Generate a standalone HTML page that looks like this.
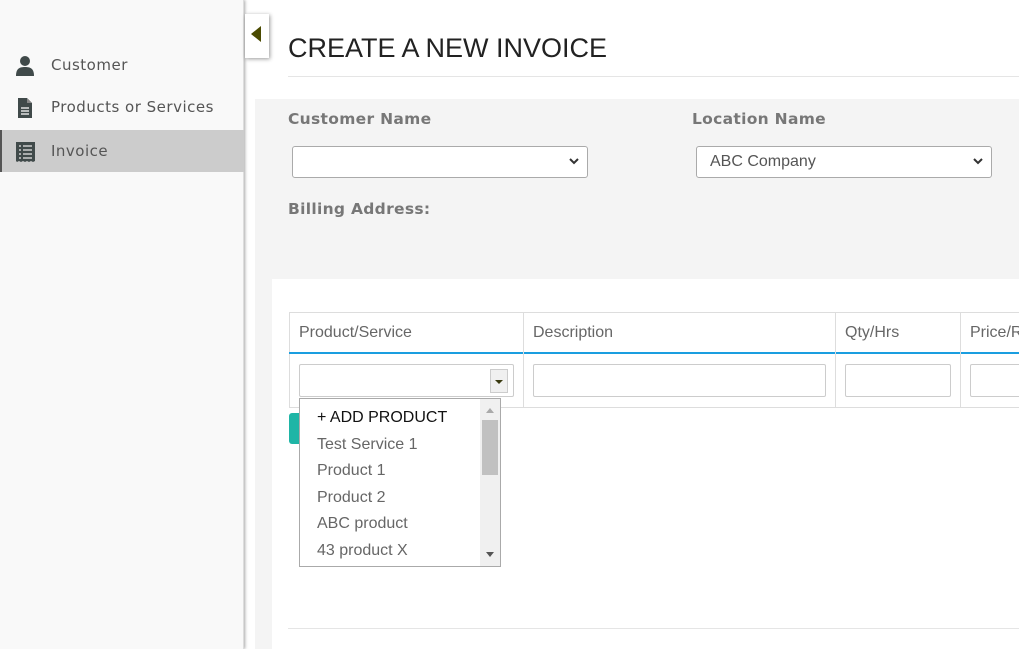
<!DOCTYPE html>
<html><head><meta charset="utf-8"><style>
*{box-sizing:border-box;margin:0;padding:0}
body{width:1019px;height:649px;overflow:hidden;background:#fff;font-family:"Liberation Sans",sans-serif;position:relative}
.abs{position:absolute}
.side{left:0;top:0;width:244px;height:649px;background:#f9f9f9;border-right:1px solid #ddd;box-shadow:1px 0 3px rgba(0,0,0,.35)}
.nav{position:absolute;left:0;width:244px;height:42px;font-family:"DejaVu Sans",sans-serif;font-size:15px;letter-spacing:.5px;color:#555;line-height:42px;padding-left:51px}
.nav svg{position:absolute;left:15px;top:11px}
.lbl{font-family:"DejaVu Sans",sans-serif;font-size:15.5px;font-weight:bold;color:#777;letter-spacing:.3px}
.sel{background:#fff;border:1px solid #aaa;border-radius:3px;height:32px;font-size:16px;color:#555;line-height:30px;padding-left:13px}
.chev{position:absolute;right:7px;top:8px}
.cell{position:absolute;border-right:1px solid #ddd}
.inp{position:absolute;background:#fff;border:1px solid #ccc;border-radius:2px;height:33px}
.th{font-size:16px;color:#666}
.opt{position:absolute;left:17px;font-size:16px;color:#666}
</style></head><body>
<div class="abs side">
 <div class="nav" style="top:44px">
  <svg width="20" height="22" viewBox="0 0 20 22"><circle cx="10" cy="6" r="5" fill="#404a4a"/><path d="M1 21 C1 14 4 12 10 12 C16 12 19 14 19 21Z" fill="#404a4a"/></svg>Customer</div>
 <div class="nav" style="top:86px">
  <svg width="20" height="22" viewBox="0 0 20 22"><path d="M3 1H12L17 6V21H3Z" fill="#404a4a"/><path d="M12 1V6H17" fill="#888"/><path d="M6 11H14M6 14H14M6 17H14" stroke="#fff" stroke-width="1.3"/></svg>Products or Services</div>
 <div class="nav" style="top:130px;background:#ccc;border-left:2px solid #555;padding-left:49px">
  <svg width="22" height="22" viewBox="0 0 22 22" style="left:13px"><path d="M1 1H20V20L18 21 16 20 14 21 12 20 10 21 8 20 6 21 4 20 2 21 1 20Z" fill="#404a4a"/><path d="M4 5h2M4 9h2M4 13h2M4 17h2M8 5h9M8 9h9M8 13h9M8 17h9" stroke="#ccc" stroke-width="1.5"/></svg>Invoice</div>
</div>
<div class="abs" style="left:245px;top:14px;width:24px;height:44px;background:#fff;box-shadow:1px 1px 4px rgba(0,0,0,.4)">
 <svg width="24" height="44"><path d="M16 12V28L6 20Z" fill="#4a4a00"/></svg></div>
<div class="abs" style="left:288px;top:33px;font-size:27px;color:#222">CREATE A NEW INVOICE</div>
<div class="abs" style="left:288px;top:76px;width:731px;height:1px;background:#e5e5e5"></div>
<div class="abs" style="left:255px;top:99px;width:764px;height:550px;background:#f4f4f4"></div>
<div class="abs" style="left:272px;top:279px;width:747px;height:370px;background:#fff"></div>
<div class="abs lbl" style="left:288px;top:110px">Customer Name</div>
<div class="abs lbl" style="left:692px;top:110px">Location Name</div>
<div class="abs lbl" style="left:288px;top:200px">Billing Address:</div>
<div class="abs sel" style="left:292px;top:146px;width:296px"><svg class="chev" width="12" height="12"><path d="M2 4L6 8 10 4" stroke="#333" stroke-width="2" fill="none"/></svg></div>
<div class="abs sel" style="left:696px;top:146px;width:296px">ABC Company<svg class="chev" width="12" height="12"><path d="M2 4L6 8 10 4" stroke="#333" stroke-width="2" fill="none"/></svg></div>
<div class="abs" style="left:289px;top:312px;width:730px;height:96px;border-top:1px solid #ddd;border-left:1px solid #ddd;border-bottom:1px solid #ddd"></div>
<div class="abs" style="left:289px;top:352px;width:730px;height:2px;background:#1a9ee0"></div>
<div class="cell" style="left:289px;top:312px;width:235px;height:96px"></div>
<div class="cell" style="left:523px;top:312px;width:313px;height:96px"></div>
<div class="cell" style="left:835px;top:312px;width:126px;height:96px"></div>
<div class="abs th" style="left:299px;top:324px">Product/Service</div>
<div class="abs th" style="left:533px;top:324px">Description</div>
<div class="abs th" style="left:845px;top:324px">Qty/Hrs</div>
<div class="abs th" style="left:970px;top:324px">Price/Rate</div>
<div class="inp" style="left:299px;top:364px;width:215px"><div style="position:absolute;right:5px;top:4px;width:18px;height:24px;border:1px solid #ccc;background:#f0f0f0"><svg width="16" height="22"><path d="M4 10H12L8 14Z" fill="#3a3a10"/></svg></div></div>
<div class="inp" style="left:533px;top:364px;width:293px"></div>
<div class="inp" style="left:845px;top:364px;width:106px"></div>
<div class="inp" style="left:970px;top:364px;width:60px"></div>
<div class="abs" style="left:289px;top:413px;width:30px;height:31px;background:#1fb5a6;border-radius:3px"></div>
<div class="abs" style="left:299px;top:398px;width:202px;height:169px;background:#fff;border:1px solid #aaa">
 <div class="opt" style="top:10px;color:#111">+ ADD PRODUCT</div>
 <div class="opt" style="top:37px">Test Service 1</div>
 <div class="opt" style="top:63px">Product 1</div>
 <div class="opt" style="top:90px">Product 2</div>
 <div class="opt" style="top:116px">ABC product</div>
 <div class="opt" style="top:143px">43 product X</div>
 <div style="position:absolute;left:180px;top:0;width:20px;height:167px;background:#f0f0f0">
  <svg width="20" height="167"><path d="M6 14L10 9 14 14Z" fill="#aaa"/><rect x="2" y="21" width="16" height="55" fill="#c1c1c1"/><path d="M6 153L10 158 14 153Z" fill="#555"/></svg></div>
</div>
<div class="abs" style="left:288px;top:628px;width:731px;height:1px;background:#e5e5e5"></div>
</body></html>
